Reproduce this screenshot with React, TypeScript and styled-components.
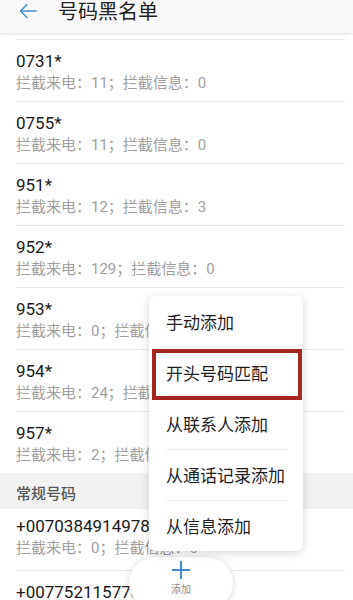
import React from "react";
import styled, { createGlobalStyle } from "styled-components";

const Global = createGlobalStyle`
  html, body { margin: 0; padding: 0; background: #ffffff; }
  body { width: 353px; height: 600px; overflow: hidden; font-family: Roboto, "Noto Sans CJK SC", sans-serif; }
  * { box-sizing: border-box; }
`;

const Screen = styled.div`
  position: relative;
  width: 353px;
  height: 600px;
  overflow: hidden;
  background: #ffffff;
`;

const Header = styled.div`
  position: relative;
  z-index: 1;
  height: 33px;
  display: flex;
  align-items: flex-start;
  gap: 20px;
  padding: 0 0 0 18px;
  background: #fafafa;
  box-shadow: 0 1px 3px rgba(0, 0, 0, 0.14);
`;

const Back = styled.svg`
  width: 20px;
  height: 20px;
  margin-top: 1px;
`;

const Title = styled.div`
  font-size: 20px;
  line-height: 22px;
  color: #222222;
  font-family: "Noto Sans CJK SC", sans-serif;
`;

const List = styled.div`
  padding-top: 6px;
`;

const Row = styled.div<{ $noBorder?: boolean }>`
  margin: 0 8px 0 16px;
  border-top: ${(p) => (p.$noBorder ? "none" : "1px solid #e8e8e8")};
  height: ${(p) => (p.$noBorder ? "61px" : "62px")};
  padding-top: ${(p) => (p.$noBorder ? "6px" : "10px")};
`;

const Num = styled.div`
  font-size: 17px;
  line-height: 22px;
  color: #1a1a1a;
`;

const Sub = styled.div`
  font-size: 15px;
  line-height: 22px;
  color: #a0a0a0;
  font-family: Roboto, "Noto Sans CJK SC", sans-serif;
`;

const Section = styled.div`
  height: 36px;
  background: #f2f2f2;
  display: flex;
  align-items: flex-end;
  padding: 0 0 5px 16px;
  font-size: 15px;
  line-height: 20px;
  color: #555555;
  font-weight: 500;
`;

const Menu = styled.div`
  position: absolute;
  left: 149px;
  top: 296px;
  width: 154px;
  background: #ffffff;
  border-radius: 6px;
  box-shadow: 0 2px 10px rgba(0, 0, 0, 0.16);
  z-index: 3;
`;

const Item = styled.div<{ $divider?: boolean }>`
  position: relative;
  height: 51px;
  display: flex;
  align-items: center;
  padding-left: 17px;
  font-size: 17px;
  color: #1f1f1f;
  font-family: "Noto Sans CJK SC", sans-serif;
  &::before {
    content: "";
    display: ${(p) => (p.$divider ? "block" : "none")};
    position: absolute;
    left: 17px;
    right: 15px;
    top: 0;
    border-top: 1px solid #ececec;
  }
`;

const Highlight = styled.span`
  position: absolute;
  left: 3px;
  right: 1px;
  top: 2px;
  bottom: -2px;
  border: 4px solid #a3271f;
  pointer-events: none;
`;

const Fab = styled.div`
  position: absolute;
  left: 129px;
  top: 557px;
  width: 104px;
  height: 52px;
  border-radius: 26px;
  background: #ffffff;
  box-shadow: 0 1px 6px rgba(0, 0, 0, 0.18);
  display: flex;
  flex-direction: column;
  align-items: center;
  padding-top: 2px;
  z-index: 2;
`;

const FabLabel = styled.div`
  font-size: 10px;
  line-height: 12px;
  color: #8a8a8a;
  margin-top: 2px;
  font-family: "Noto Sans CJK SC", sans-serif;
`;

const rows = [
  { n: "0731*", s: "拦截来电：11；拦截信息：0" },
  { n: "0755*", s: "拦截来电：11；拦截信息：0" },
  { n: "951*", s: "拦截来电：12；拦截信息：3" },
  { n: "952*", s: "拦截来电：129；拦截信息：0" },
  { n: "953*", s: "拦截来电：0；拦截信息：0" },
  { n: "954*", s: "拦截来电：24；拦截信息：0" },
  { n: "957*", s: "拦截来电：2；拦截信息：0" },
];

export default function App() {
  return (
    <>
      <Global />
      <Screen>
        <Header>
          <Back viewBox="0 0 20 20" fill="none" stroke="#4a90d4" strokeWidth="1.6" strokeLinecap="round" strokeLinejoin="round">
            <path d="M18 10H3" />
            <path d="M9 3.5L2.5 10L9 16.5" />
          </Back>
          <Title>号码黑名单</Title>
        </Header>
        <List>
          {rows.map((r) => (
            <Row key={r.n}>
              <Num>{r.n}</Num>
              <Sub>{r.s}</Sub>
            </Row>
          ))}
          <Section>常规号码</Section>
          <Row $noBorder>
            <Num>+00703849149780</Num>
            <Sub>拦截来电：0；拦截信息：0</Sub>
          </Row>
          <Row>
            <Num>+00775211577c999</Num>
            <Sub>拦截来电：0；拦截信息：0</Sub>
          </Row>
        </List>
        <Menu>
          <Item>手动添加</Item>
          <Item>
            开头号码匹配
            <Highlight />
          </Item>
          <Item>从联系人添加</Item>
          <Item $divider>从通话记录添加</Item>
          <Item $divider>从信息添加</Item>
        </Menu>
        <Fab>
          <svg width="22" height="22" viewBox="0 0 22 22" fill="none" stroke="#2d7fd3" strokeWidth="1.8">
            <path d="M11 2V20" />
            <path d="M2 11H20" />
          </svg>
          <FabLabel>添加</FabLabel>
        </Fab>
      </Screen>
    </>
  );
}
